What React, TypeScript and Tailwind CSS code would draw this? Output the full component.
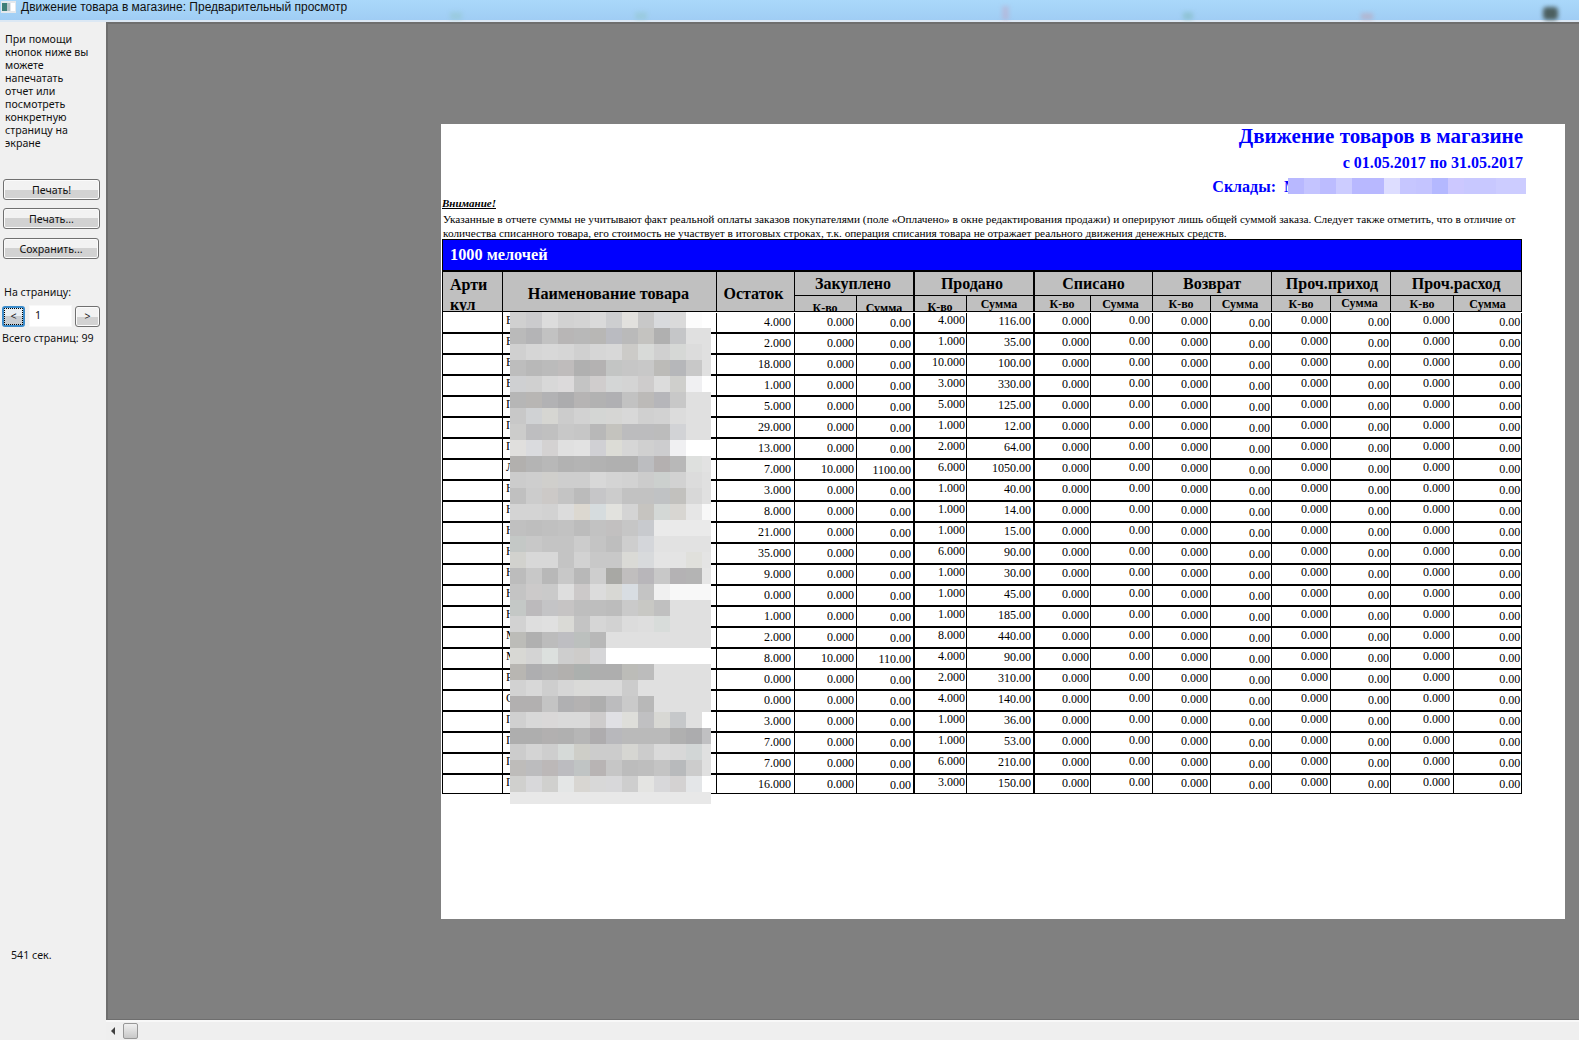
import React from "react";

const rowsData: [string, string, string, string, string, string][] = [
  ["В", "4.000", "0.000", "0.00", "4.000", "116.00"],
  ["В", "2.000", "0.000", "0.00", "1.000", "35.00"],
  ["В", "18.000", "0.000", "0.00", "10.000", "100.00"],
  ["В", "1.000", "0.000", "0.00", "3.000", "330.00"],
  ["П", "5.000", "0.000", "0.00", "5.000", "125.00"],
  ["П", "29.000", "0.000", "0.00", "1.000", "12.00"],
  ["П", "13.000", "0.000", "0.00", "2.000", "64.00"],
  ["Л", "7.000", "10.000", "1100.00", "6.000", "1050.00"],
  ["Н", "3.000", "0.000", "0.00", "1.000", "40.00"],
  ["Н", "8.000", "0.000", "0.00", "1.000", "14.00"],
  ["Н", "21.000", "0.000", "0.00", "1.000", "15.00"],
  ["Н", "35.000", "0.000", "0.00", "6.000", "90.00"],
  ["Н", "9.000", "0.000", "0.00", "1.000", "30.00"],
  ["Н", "0.000", "0.000", "0.00", "1.000", "45.00"],
  ["Н", "1.000", "0.000", "0.00", "1.000", "185.00"],
  ["М", "2.000", "0.000", "0.00", "8.000", "440.00"],
  ["М", "8.000", "10.000", "110.00", "4.000", "90.00"],
  ["Р", "0.000", "0.000", "0.00", "2.000", "310.00"],
  ["С", "0.000", "0.000", "0.00", "4.000", "140.00"],
  ["П", "3.000", "0.000", "0.00", "1.000", "36.00"],
  ["П", "7.000", "0.000", "0.00", "1.000", "53.00"],
  ["П", "7.000", "0.000", "0.00", "6.000", "210.00"],
  ["П", "16.000", "0.000", "0.00", "3.000", "150.00"],
];

const numCols = [
  "pt-[2px] pr-[3px] border-l",
  "pt-[2px] pr-[2px] border-l",
  "pt-[3px] pr-[2px] border-l",
  "pt-0 pr-[1px] border-l-2",
  "pt-[1px] pr-[2px] border-l",
  "pt-[1px] pr-[1px] border-l-2",
  "pt-0 pr-[2px] border-l",
  "pt-[1px] pr-[2px] border-l",
  "pt-[3px] pr-[1px] border-l",
  "pt-0 pr-[2px] border-l",
  "pt-[2px] pr-[1px] border-l",
  "pt-0 pr-[3px] border-l",
  "pt-[2px] pr-[1px] border-l border-r",
];

const colWidths = [60, 214, 78, 62, 57, 53, 67, 57, 62, 58, 61, 59, 60, 63, 69];

const groups = [
  { t: "Закуплено", c: "border-l", h: "pr-[2px]", k: "pt-[5px] pr-[1px]", s: "pt-[5px] pr-[2px]" },
  { t: "Продано", c: "border-l-2", h: "pr-[4px]", k: "pt-[4px] pr-[1px]", s: "pt-[1px] pr-[2px]" },
  { t: "Списано", c: "border-l-2", h: "", k: "pt-[1px] pr-[1px]", s: "pt-[1px] pr-[2px]" },
  { t: "Возврат", c: "border-l", h: "", k: "pt-[1px] pr-[1px]", s: "pt-[1px] pr-[2px]" },
  { t: "Проч.приход", c: "border-l", h: "pl-[2px]", k: "pt-[1px]", s: "pt-[0px] pr-[2px]" },
  { t: "Проч.расход", c: "border-l border-r", h: "", k: "pt-[1px]", s: "pt-[1px]" },
];

const e = "e0e0e0";
const mosaic: string[][] = [
  ["d0d0d0","cbcbcd","dcdcdc","d2d2d2","d4d4d4","dadada","cdced0","e2e1de","c8c8c8","d8dadd","dadada","fcfcfc","ffffff"],
  ["bababa","b4b4b6","c2c2c2","b8b6b6","b8b8b8","b8b7b5","babbc1","bababa","c4c3c0","b0b0b0","c5c6c8",e,e],
  ["d0d0d0","d6d6d6","d8d8d8","d6d6d6","d0d0d0","d6d6d6","d8d8d8","cccbc8","d8dad8","d0d0d0","d6d8d6","dcdcdc",e],
  ["bdbdbd","b8b8b8","bbbbbb","bfbcbc","b0b0b0","b4b2b2","c3c5c4","c6c6c6","c8c8c8","bcbbb8","b6b7ba","c8c8c8",e],
  ["cfd0d2","d0d0d0","d8d8d8","dcdadb","c4c4c4","d0cdcd","d4d6d6","d4d4d4","cecccc","dcdcdc","cfcfcc","f0f0f2","ffffff"],
  ["b6b6b6","b8b6b4","b2b2b4","acacae","b6b4b4","b2b2b2","b0b0b3","c2c2c2","bcbab8","b6b6ba","c8c8c8",e,e],
  ["c8c8c8","d0d2d4","d6d6d2","cccccc","d2d2d2","d4d6d4","d6d6d4","d8d8d8","d0d0d0","d2d2d2","dcdcdc",e,e],
  ["cccccb","bebec0","c0c0c0","c8c8c8","c6c6c6","b8b8b8","c4c3be","bcbcbe","bcbcbe","bcbcbc","d2d3d6",e,e],
  ["e0dfdd","dadbde","d4d2d2",e,"e2e2e2","d0d0d4","dcdcd6","d6d6d6","d0d0d0","cdcdcf","f0f0f2","ffffff","ffffff"],
  ["b2b0ae","b4b4b4","b8b8b8","b2b2b2","b4b4b4","b2b2b2","b0b0b0","b0b0b0","bcbdc0","b4b0b0","b8b8b8","dee0de","e2e2e2"],
  ["cccccc","cecece","d0cfcc","cecece","cecece","d8d8d8","d4d4d4","d2d2d2","cccccc","ccd0ce","d2d2d2","dcdcdc",e],
  ["c0c0c0","cccccc","ccc9c7","c4c4c4","bbbbbb","c6c6c8","cccccc","c2c2c2","c2c2c2","c0c2c4","c2c1be","d8d8d8",e],
  ["d4d4d4","d4d4d4","d2d2d2","dcdcdc","dcd8d0","d6dcde","e2e2de","d4d4d4","c6c4c0","d4d8d6","d8d6d2","e6e6e6","f8f8f8"],
  ["c0c0c0","bebebe","c0c0c0","c2c2c2","bcbcbc","c2c2c2","c2c0c0","c6c6c6","c8cace","eaeaea","eaeaea","eaeaea","eaeaea"],
  ["c4c8c6","c8c8c8","c4c4c4","c4c4c4","cccccc","c4c4c4","bebebe","cecece","d4d6da","e2e2e2","e2e2e2","e2e2e2","e2e2e2"],
  ["d2d2ce","d8d8d8","d8d8d8","c4c4c4","d2d2d2","c8c8c8","c8c8c8","dadad6","d8dadc","e4e4e4","e4e4e4","e0e0dc","e4e4e4"],
  ["bcbcbc","c8c8c8","b8b8b8","c8c8c8","b8b8b8","cecece","a8a8a4","c0bebe","b8b6ba","c8c8c8","b4b2b4","b4b4b4","e6e6e6"],
  ["c4c4c4","cccaca","cacaca","dedede","ccc9c9","dcdcdc","d8d8d4","d8dde2","c4c4c4","f0f0f0","f8f8f8","f8f8f8","f8f8f8"],
  ["c4c8c6","bcbabc","c4c4c6","c6c4c4","bebebe","bebebe","bcbcbc","cacaca","c8c8c4","c0c0c0",e,e,e],
  ["d2d2d2","dedede",e,"dadad6","c4c4c4","d6d6d6","d2d2d2","dcdcdc","dedede","d8dcda",e,e,e],
  ["bcbcb8","b0b0b0","bcbcbc","bebec2","bcc0be","b8b8b8",e,e,e,e,e,e,e],
  ["d8d8d4","d4d4d4","dce0de","cecece","ceccca","d6d6d8","ffffff","ffffff","ffffff","ffffff","ffffff","ffffff","ffffff"],
  ["b8b6b2","aeaeb0","b2b2b2","b2b0ae","acb0ae","aeaeae","aeaeae","bcbcb8","bcbcbc",e,e,e,e],
  ["d2d2d2","d8d8d8","cecece","d6d6d6","dadad8","dadada","dadada","cccccc",e,e,e,e,e],
  ["b2b0b0","b2b0b0","c4c4c4","b0b0b2","b4b2b2","aeaeae","bcbcbe","cacaca","b8b8b8",e,e,e,e],
  ["d0d0d0","d8d8d8","dad8d8","dadada","dadada","cecccc","e0e0e4","dededa","c0c0c2","d8d8d4","c6c8ca",e,"ffffff"],
  ["aeaeae","aeaeae","b2b0b0","b0b0b0","b6b6b6","aeacae","b8b8bc","bababa","bababa","bababa","b0b0b0","acacae","c0c0c2"],
  ["cccccc","d4d4d4","cecece","d6dad8","cecec8","cccccc","cccccc","d6d6d2","cccccc","dadada","d8d8d8","d2d6d6",e],
  ["bebcba","bcbcbe","bcb8b8","bcbcc0","c0c4c4","b8b4b4","c6c6c6","bcbcbc","bebebe","c4c4c4","b8babc","cccccc",e],
  ["d0d0ce","d8d8da","d0d0ce","e4e6e6","d8d6d2","d8d8d8","d8d8da","cecece","e4e4e2","d8d8da","d4d2d2","e4e6e8","ffffff"],
  Array(13).fill("e8e8e8"),
];

const storeMosaic = ["b8b8ff","c4c4ff","bcbcff","ccccff","b8b8ff","b8b8ff","ddddff","c6c6ff","c4c4ff","b4b8ff","ccc8ff","c8c8ff","c8c8ff","ccccff","ccccff"];

function NameMosaic() {
  return (
    <svg className="absolute left-[68px] top-[73px]" width={201} height={492} shapeRendering="crispEdges">
      {mosaic.map((row, r) =>
        row.map((c, i) => (
          <rect key={`${r}-${i}`} x={i * 16} y={r * 16} width={16} height={16} fill={`#${c}`} />
        ))
      )}
    </svg>
  );
}

function StoreMosaic() {
  return (
    <svg className="absolute left-[4px] top-[1px]" width={238} height={16} shapeRendering="crispEdges">
      {storeMosaic.map((c, i) => (
        <rect key={i} x={i * 16} y={0} width={16} height={16} fill={`#${c}`} />
      ))}
    </svg>
  );
}

function WinButton({ children, className }: { children: React.ReactNode; className: string }) {
  return (
    <button className={`flex items-center justify-center rounded-[3px] border border-[#707070] bg-gradient-to-b from-[#f2f2f2] from-50% to-[#d2d2d2] to-50% pt-px shadow-[inset_0_0_0_1px_#fbfbfb] text-[#111] ${className}`}>
      {children}
    </button>
  );
}

export default function App() {
  return (
    <div className="flex h-[1040px] w-[1579px] flex-col overflow-hidden bg-[#f0f0f0] font-['Noto_Sans',sans-serif] text-[10.65px] leading-[13px] text-[#111]">
      {/* window title */}
      <div className="relative flex h-[22px] shrink-0 items-start gap-[5px] border-b-2 border-[#dce8f4] bg-gradient-to-b from-[#aad8fa] to-[#a0cdf4]">
        <svg className="ml-px mt-[1px] shrink-0" width="15" height="12" viewBox="0 0 15 12">
          <rect x="0" y="0" width="15" height="12" fill="#e4e8ec" />
          <rect x="1" y="2" width="5" height="8" fill="#3f7f78" />
          <rect x="6" y="2" width="3" height="8" fill="#b8c4c8" />
          <rect x="10" y="2" width="4" height="8" fill="#ffffff" />
        </svg>
        <span className="font-['Liberation_Sans',sans-serif] text-[12px] leading-[14px] text-[#111]">
          Движение товара в магазине: Предварительный просмотр
        </span>
        <div className="absolute left-[450px] top-[12px] h-[8px] w-[12px] bg-[#8fc4c0] opacity-40 blur-[2px]" />
        <div className="absolute left-[635px] top-[12px] h-[8px] w-[12px] bg-[#8fc4c0] opacity-40 blur-[2px]" />
        <div className="absolute left-[1002px] top-[6px] h-[14px] w-[7px] bg-[#c0a8c8] opacity-50 blur-[2px]" />
        <div className="absolute left-[1183px] top-[12px] h-[8px] w-[10px] bg-[#7fb8b8] opacity-50 blur-[2px]" />
        <div className="absolute left-[1361px] top-[13px] h-[7px] w-[12px] bg-[#c0a0b0] opacity-50 blur-[2px]" />
        <div className="absolute left-[1543px] top-[7px] h-[13px] w-[15px] rounded-[4px] bg-[#4c5f60] blur-[2px]" />
      </div>

      <div className="flex min-h-0 flex-1">
        {/* left panel */}
        <div className="flex w-[106px] shrink-0 flex-col pt-[11px]">
          <p className="pl-[5px] pr-[2px]">
            При помощи<br />кнопок ниже вы<br />можете<br />напечатать<br />отчет или<br />посмотреть<br />конкретную<br />страницу на<br />экране
          </p>
          <WinButton className="ml-[3px] mt-[29px] h-[21px] w-[97px]">Печать!</WinButton>
          <WinButton className="ml-[3px] mt-[8px] h-[21px] w-[97px]">Печать...</WinButton>
          <WinButton className="ml-[3px] mt-[9px] h-[21px] w-[96px]">Сохранить...</WinButton>
          <div className="mt-[27px] pl-[4px]">На страницу:</div>
          <div className="ml-[2px] mt-[6px] flex items-center">
            <button className="flex h-[21px] w-[23px] items-center justify-center rounded-[3px] border-2 border-[#3c8ccb] bg-gradient-to-b from-[#e8eef2] from-50% to-[#c8ccd0] to-50% outline-1 -outline-offset-3 outline-dotted outline-black">&lt;</button>
            <div className="ml-[4px] h-[22px] w-[43px] border border-[#f8f8f8] bg-white pl-[5px] pt-[3px]">1</div>
            <WinButton className="ml-[3px] h-[21px] w-[25px]">&gt;</WinButton>
          </div>
          <div className="mt-[5px] pl-[2px]">Всего страниц: 99</div>
          <div className="mb-[78px] mt-auto pl-[11px]">541 сек.</div>
        </div>

        {/* viewer */}
        <div className="flex min-w-0 flex-1 flex-col">
          <div className="min-h-0 flex-1 overflow-hidden border-b border-l-2 border-t-2 border-[#6e6e6e] bg-[#808080] pl-[333px] pt-[100px]">
            <div className="h-[795px] w-[1124px] overflow-hidden bg-white pl-px font-['Liberation_Serif',serif] text-black">
              <div className="pr-[42px] text-right font-bold text-[#0000ff]">
                <div className="h-[26px] text-[21px] leading-[24px]">Движение товаров в магазине</div>
                <div className="h-[26px] text-[16px] leading-[26px]">с 01.05.2017 по 31.05.2017</div>
              </div>
              <div className="flex h-[20px] justify-end pr-[39px] pt-px text-[16px] font-bold leading-[20px] text-[#0000ff]">
                <span>Склады:</span>
                <span className="relative ml-[8px] w-[242px] text-left">
                  М
                  <StoreMosaic />
                </span>
              </div>
              <div className="h-[14px] text-[11px] font-bold italic leading-[14px] underline">Внимание!</div>
              <p className="mt-[2px] h-[27px] w-[1090px] pl-px text-[11.3px] leading-[14px]">
                Указанные в отчете суммы не учитывают факт реальной оплаты заказов покупателями (поле «Оплачено» в окне редактирования продажи) и оперируют лишь общей суммой заказа. Следует также отметить, что в отличие от количества списанного товара, его стоимость не участвует в итоговых строках, т.к. операция списания товара не отражает реального движения денежных средств.
              </p>

              <div className="relative w-[1080px]">
                <table className="w-[1080px] table-fixed border-separate border-spacing-0 border-black">
                  <colgroup>
                    {colWidths.map((w, i) => (
                      <col key={i} width={w} />
                    ))}
                  </colgroup>
                  <thead>
                    <tr>
                      <th colSpan={15} className="h-[31px] border border-b-0 border-black bg-[#0000ff] pb-[2px] pl-[7px] text-left text-[16.3px] font-bold text-white">
                        1000 мелочей
                      </th>
                    </tr>
                    <tr className="text-[16px] font-bold">
                      <th rowSpan={2} className="border-l border-t-2 border-black bg-[#c0c0c0] p-0 align-top">
                        <div className="h-[39px] overflow-hidden pl-[7px] pt-[3px] text-left leading-[20px]">Арти<br />кул</div>
                      </th>
                      <th rowSpan={2} className="border-l border-t-2 border-black bg-[#c0c0c0] pr-[2px] pt-[6px] text-center text-[16.2px]">Наименование товара</th>
                      <th rowSpan={2} className="border-l border-t-2 border-black bg-[#c0c0c0] pr-[4px] pt-[4px] text-center">Остаток</th>
                      {groups.map((g) => (
                        <th key={g.t} colSpan={2} className={`h-[25px] border-t-2 border-black bg-[#c0c0c0] p-0 text-center leading-[20px] ${g.c} ${g.h}`}>
                          {g.t}
                        </th>
                      ))}
                    </tr>
                    <tr className="text-[12px] font-bold">
                      {groups.map((g) => (
                        <React.Fragment key={g.t}>
                          <th className={`h-[16px] border-t border-black bg-[#c0c0c0] p-0 ${g.c.replace(" border-r", "")}`}>
                            <div className={`h-[15px] overflow-hidden text-center leading-[14px] ${g.k}`}>К-во</div>
                          </th>
                          <th className={`h-[16px] border-l border-t border-black bg-[#c0c0c0] p-0 ${g.c.includes("border-r") ? "border-r" : ""}`}>
                            <div className={`h-[15px] overflow-hidden text-center leading-[14px] ${g.s}`}>Сумма</div>
                          </th>
                        </React.Fragment>
                      ))}
                    </tr>
                  </thead>
                  <tbody className="text-[12px]">
                    {rowsData.map((r, ri) => {
                      const values = [r[1], r[2], r[3], r[4], r[5], "0.000", "0.00", "0.000", "0.00", "0.000", "0.00", "0.000", "0.00"];
                      const top = ri === 0 ? "border-t pt-px" : "border-t-2";
                      const last = ri === rowsData.length - 1 ? "border-b" : "";
                      return (
                        <tr key={ri}>
                          <td className={`h-[21px] border-l border-black align-top ${top} ${last}`} />
                          <td className={`h-[21px] border-l border-black pl-[3px] align-top leading-[14px] ${top} ${last}`}>{r[0]}</td>
                          {values.map((v, i) => (
                            <td key={i} className={`h-[21px] border-black align-top ${top} ${last}`}>
                              <div className={`h-full border-black text-right leading-[14px] ${numCols[i]}`}>{v}</div>
                            </td>
                          ))}
                        </tr>
                      );
                    })}
                  </tbody>
                </table>
                <NameMosaic />
              </div>
            </div>
          </div>
          {/* scrollbar */}
          <div className="h-[2px] shrink-0 bg-[#f8f8f8]" />
          <div className="flex h-[18px] shrink-0 items-center bg-[#efefef]">
            <svg className="ml-[5px]" width="5" height="8" viewBox="0 0 5 8">
              <path d="M4 0 L0 4 L4 8 Z" fill="#404040" />
            </svg>
            <div className="ml-[7px] h-[16px] w-[15px] rounded-[2px] border border-[#979797] bg-gradient-to-b from-[#f0f0f0] to-[#c8c8c8]" />
          </div>
        </div>
      </div>
    </div>
  );
}
